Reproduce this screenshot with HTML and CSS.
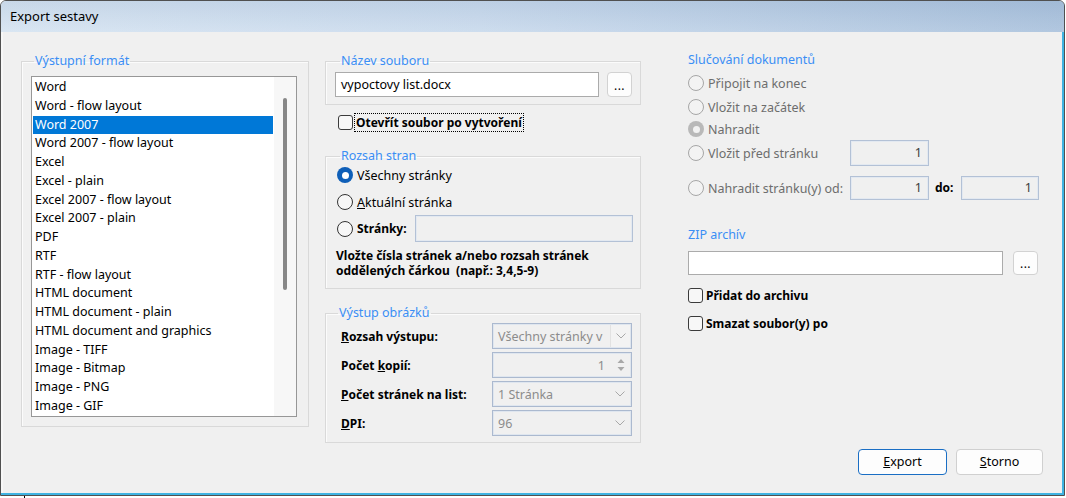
FILE: index.html
```html
<!DOCTYPE html>
<html lang="cs">
<head>
<meta charset="utf-8">
<title>Export sestavy</title>
<link rel="stylesheet" href="styles.css">
</head>
<body>
<div class="window">
  <div class="titlebar">Export sestavy</div>
  <div class="content">
    <fieldset class="group group-format">
      <legend>Výstupní formát</legend>
      <div class="listbox">
        <ul class="items">
          <li>Word</li>
          <li>Word - flow layout</li>
          <li class="selected">Word 2007</li>
          <li>Word 2007 - flow layout</li>
          <li>Excel</li>
          <li>Excel - plain</li>
          <li>Excel 2007 - flow layout</li>
          <li>Excel 2007 - plain</li>
          <li>PDF</li>
          <li>RTF</li>
          <li>RTF - flow layout</li>
          <li>HTML document</li>
          <li>HTML document - plain</li>
          <li>HTML document and graphics</li>
          <li>Image - TIFF</li>
          <li>Image - Bitmap</li>
          <li>Image - PNG</li>
          <li>Image - GIF</li>
        </ul>
        <div class="scrollbar"><div class="thumb"></div></div>
      </div>
    </fieldset>

    <div class="col-mid">
      <fieldset class="group group-file">
        <legend>Název souboru</legend>
        <div class="file-row">
          <div class="textbox name-box">vypoctovy list.docx</div>
          <div class="btn-dots">...</div>
        </div>
      </fieldset>

      <div class="check-row open-row">
        <span class="checkbox"></span>
        <span class="focus-label">Otevřít soubor po vytvoření</span>
      </div>

      <fieldset class="group group-range">
        <legend>Rozsah stran</legend>
        <div class="radio-row r1"><span class="radio checked"></span><span>Všechny stránky</span></div>
        <div class="radio-row r2"><span class="radio"></span><span><u>A</u>ktuální stránka</span></div>
        <div class="radio-row r3"><span class="radio"></span><span class="bold">Stránky:</span><div class="textbox disabled pages-box"></div></div>
        <p class="hint">Vložte čísla stránek a/nebo rozsah stránek<br>oddělených čárkou &nbsp;(např.: 3,4,5-9)</p>
      </fieldset>

      <fieldset class="group group-image">
        <legend>Výstup obrázků</legend>
        <div class="form-grid">
          <span class="bold"><u>R</u>ozsah výstupu:</span>
          <div class="combo"><span class="combo-text">Všechny stránky v</span><span class="combo-arrow sep"><svg width="10" height="6" viewBox="0 0 10 6"><polyline points="0.5,0.5 5,5 9.5,0.5" fill="none" stroke="#a8a8a8" stroke-width="1"/></svg></span></div>

          <span class="bold">Počet <u>k</u>opií:</span>
          <div class="combo spin"><span class="spin-val">1</span><span class="spin-arrows"><svg width="8" height="16" viewBox="0 0 8 16"><polygon points="4,2 7.5,6 0.5,6" fill="#a8a8a8"/><polygon points="0.5,10 7.5,10 4,14" fill="#a8a8a8"/></svg></span></div>

          <span class="bold"><u>P</u>očet stránek na list:</span>
          <div class="combo"><span class="combo-text">1 Stránka</span><span class="combo-arrow"><svg width="10" height="6" viewBox="0 0 10 6"><polyline points="0.5,0.5 5,5 9.5,0.5" fill="none" stroke="#a8a8a8" stroke-width="1"/></svg></span></div>

          <span class="bold"><u>D</u>PI:</span>
          <div class="combo"><span class="combo-text">96</span><span class="combo-arrow"><svg width="10" height="6" viewBox="0 0 10 6"><polyline points="0.5,0.5 5,5 9.5,0.5" fill="none" stroke="#a8a8a8" stroke-width="1"/></svg></span></div>
        </div>
      </fieldset>
    </div>

    <div class="col-right">
      <div class="heading merge-heading">Slučování dokumentů</div>
      <div class="merge-grid">
        <div class="radio-row dis m1"><span class="radio"></span><span>Připojit na konec</span></div>
        <div class="radio-row dis m2"><span class="radio"></span><span>Vložit na začátek</span></div>
        <div class="radio-row dis m3"><span class="radio checked"></span><span>Nahradit</span></div>
        <div class="radio-row dis m4"><span class="radio"></span><span>Vložit před stránku</span></div>
        <div class="textbox disabled num m4b">1</div>
        <div class="radio-row dis m5"><span class="radio"></span><span>Nahradit stránku(y) od:</span></div>
        <div class="textbox disabled num m5b">1</div>
        <span class="bold do-label">do:</span>
        <div class="textbox disabled num m5c">1</div>
      </div>

      <div class="heading zip-heading">ZIP archív</div>
      <div class="file-row zip-row">
        <div class="textbox zip-box"></div>
        <div class="btn-dots">...</div>
      </div>
      <div class="check-row zip-check1"><span class="checkbox"></span><span class="semi">Přidat do archivu</span></div>
      <div class="check-row zip-check2"><span class="checkbox"></span><span class="semi">Smazat soubor(y) po</span></div>

      <div class="buttons">
        <div class="button default"><u>E</u>xport</div>
        <div class="button"><u>S</u>torno</div>
      </div>
    </div>
  </div>
</div>
<div class="under"></div>
</body>
</html>
```

FILE: styles.css
```css
* { box-sizing: border-box; }

html, body {
  margin: 0;
  padding: 0;
  background: #ffffff;
}

body {
  font-family: "Noto Sans", "Open Sans", sans-serif;
  font-size: 12.5px;
  color: #000;
}

.window {
  width: 1065px;
  height: 496px;
  border: 1px solid #505050;
  border-radius: 6px 6px 0 0;
  background: #f0f0f0;
  box-shadow: inset -2px -2px 0 #3fb3e2, inset 2px 0 0 #f7f7f7;
  display: flex;
  flex-direction: column;
  overflow: hidden;
}

.titlebar {
  height: 31px;
  flex: 0 0 31px;
  padding-left: 9px;
  line-height: 31px;
  font-size: 13px;
  color: #000;
  background:
    linear-gradient(to bottom, rgba(90, 120, 160, 0.10), rgba(255, 255, 255, 0.10)),
    linear-gradient(to right, #d5e3f1 0%, #c8d9ec 45%, #a9c1dc 100%);
}

.content {
  flex: 1;
  display: flex;
  align-items: stretch;
  padding: 22px 19px 20px 20px;
}

/* group boxes */
fieldset.group {
  margin: 0;
  min-width: 0;
  border: 1px solid #d9d9d9;
  box-shadow: 1px 1px 0 #fbfbfb inset;
  padding: 3px 7px 7px 9px;
}

fieldset.group legend {
  line-height: 13px;
  padding: 0 1px 2px;
  color: #3a8ef5;
}

.heading {
  color: #3a8ef5;
  line-height: 12px;
}

/* format list */
.group-format {
  flex: 0 0 288px;
  align-self: flex-start;
  padding: 7px 11px 9px 9px !important;
}

.group-format legend { margin-left: 3px; }

.listbox {
  height: 341px;
  border: 1px solid #979797;
  background: #ffffff;
  display: flex;
  padding-top: 1px;
}

.items {
  list-style: none;
  margin: 0;
  padding: 0 0 0 1px;
  flex: 1;
}

.items li {
  height: 18.75px;
  line-height: 18.75px;
  padding-left: 2px;
  white-space: nowrap;
}

.items li.selected {
  background: #0078d7;
  color: #ffffff;
  margin-right: 1px;
}

.scrollbar {
  flex: 0 0 22px;
  margin-top: -1px;
  background: #f7f7f7;
  padding: 21px 0 0 9px;
}

.thumb {
  width: 4px;
  height: 192px;
  border-radius: 2px;
  background: #878787;
}

/* middle column */
.col-mid {
  flex: 0 0 316px;
  margin-left: 16px;
  display: flex;
  flex-direction: column;
}

.group-file legend { margin-left: 5px; }

.file-row {
  display: flex;
  align-items: center;
}

.textbox {
  height: 25px;
  border: 1px solid #ababab;
  background: #ffffff;
  line-height: 23px;
  padding: 0 5px;
  white-space: nowrap;
  overflow: hidden;
}

.name-box {
  width: 264px;
}

.btn-dots {
  width: 25px;
  height: 25px;
  margin-left: 8px;
  border: 1px solid #d2d2d2;
  border-radius: 4px;
  background: #fdfdfd;
  text-align: center;
  line-height: 25px;
  font-size: 12px;
  letter-spacing: 0.5px;
}

.check-row {
  display: flex;
  align-items: center;
  height: 19px;
}

.open-row {
  margin-top: 8px;
  padding-left: 13px;
}

.checkbox {
  width: 15px;
  height: 15px;
  flex: 0 0 15px;
  border: 1px solid #3b3b3b;
  border-radius: 3px;
  background: #f7f7f7;
  margin-right: 2px;
}

.focus-label {
  font-weight: 700;
  font-size: 12px;
  outline: 1px dotted #000;
  outline-offset: 0;
  line-height: 17px;
  padding: 0 1px;
}

.bold { font-weight: 700; font-size: 12px; }
.semi { font-weight: 700; font-size: 12px; }

.group-range {
  margin-top: 17px !important;
  padding: 2px 7px 10px 10px !important;
}

.group-range legend { margin-left: 4px; }

.radio-row {
  display: flex;
  align-items: center;
  height: 18px;
  white-space: nowrap;
}

.radio {
  width: 16px;
  height: 16px;
  flex: 0 0 16px;
  border: 1px solid #333333;
  border-radius: 50%;
  background: #f7f7f7;
  margin-right: 4px;
  display: flex;
  align-items: center;
  justify-content: center;
}

.group-range .radio { margin-left: 1px; }

.radio.checked {
  border: none;
  background: #0f5fb8;
}

.radio.checked::after {
  content: "";
  width: 7px;
  height: 7px;
  border-radius: 50%;
  background: #ffffff;
}

.r2 { margin-top: 9px; }

.r3 {
  margin-top: 4px;
  height: 27px;
}

.r3 .bold { margin-right: 8px; }

.textbox.disabled {
  background: #f0f0f0;
  border: 1px solid #b3c1d6;
  box-shadow: inset 0 0 0 1px #e3e9f1;
}

.pages-box {
  flex: 1;
  height: 27px;
}

.hint {
  margin: 6px 0 0;
  font-weight: 700;
  font-size: 12px;
  line-height: 15px;
}

.group-image {
  margin-top: 17px !important;
  padding: 2px 7px 6px 15px !important;
}

.group-image legend { margin-left: -3px; }

.form-grid {
  display: grid;
  grid-template-columns: 151px 140px;
  grid-auto-rows: 26px;
  row-gap: 3px;
  align-items: center;
}

.combo {
  height: 26px;
  border: 1px solid #abb9cf;
  box-shadow: inset 0 0 0 1px #dfe6ef;
  background: #f0f0f0;
  display: flex;
  align-items: center;
  color: #8c8c8c;
  overflow: hidden;
}

.combo-text {
  flex: 1;
  padding-left: 5px;
  white-space: nowrap;
  overflow: hidden;
}

.combo-arrow {
  flex: 0 0 20px;
  height: 22px;
  display: flex;
  align-items: center;
  justify-content: center;
  margin-right: 1px;
}

.combo-arrow.sep {
  background: #f3f3f3;
  border-left: 1px solid #e2e2e2;
}

.spin-val {
  flex: 1;
  text-align: right;
  padding-right: 7px;
  color: #8c8c8c;
}

.spin-arrows {
  flex: 0 0 18px;
  height: 22px;
  display: flex;
  align-items: center;
  justify-content: center;
  margin-right: 1px;
}

/* right column */
.col-right {
  flex: 0 0 356px;
  margin-left: 47px;
  display: flex;
  flex-direction: column;
}

.merge-grid {
  margin-top: 6px;
  display: grid;
  grid-template-columns: 162px 79px 32px 78px;
  grid-template-rows: 22px 24px 22px 26px 34px;
  align-items: end;
}

.radio-row.dis { color: #6d6d6d; }

.radio-row.dis .radio {
  border-color: #a6a6a6;
  background: #f3f3f3;
}

.radio-row.dis .radio.checked {
  border: none;
  background: #b9b9b9;
}

.radio-row.dis .radio.checked::after {
  background: #f2f2f2;
}

.m1 { grid-column: 1 / 5; grid-row: 1; height: 22px; }
.m2 { grid-column: 1 / 5; grid-row: 2; height: 22px; }
.m3 { grid-column: 1 / 5; grid-row: 3; height: 22px; }
.m4 { grid-column: 1; grid-row: 4; height: 26px; }
.m4b { grid-column: 2; grid-row: 4; height: 26px; }
.m5 { grid-column: 1; grid-row: 5; height: 24px; overflow: hidden; }
.m5b { grid-column: 2; grid-row: 5; height: 24px; }
.do-label { grid-column: 3; grid-row: 5; height: 24px; line-height: 24px; padding-left: 6px; }
.m5c { grid-column: 4; grid-row: 5; height: 24px; }

.textbox.num {
  text-align: right;
  padding-right: 6px;
  color: #3c3c3c;
}

.m4b { line-height: 24px; }
.m5b, .m5c { line-height: 22px; }

.zip-heading { margin-top: 29px; }

.zip-row { margin-top: 10px; }

.zip-box {
  width: 315px;
  height: 24px;
}

.zip-row .btn-dots {
  margin-left: 10px;
  height: 24px;
  line-height: 24px;
}

.zip-check1 { margin-top: 11px; height: 18px; }
.zip-check2 { margin-top: 10px; height: 18px; }

.col-right .checkbox { margin-right: 3px; }

.buttons {
  margin-top: auto;
  display: flex;
  justify-content: flex-end;
  gap: 9px;
  padding-right: 1px;
}

.button {
  width: 89px;
  height: 26px;
  border: 1px solid #d0d0d0;
  border-radius: 4px;
  background: #fdfdfd;
  text-align: center;
  line-height: 24px;
}

.button.default {
  border-color: #1a6ec4;
  box-shadow: inset 0 0 0 1px #fdfdfd;
}

.button + .button { width: 87px; }

.under {
  width: 1px;
  height: 2px;
  margin-left: 24px;
  background: #000;
}
```
